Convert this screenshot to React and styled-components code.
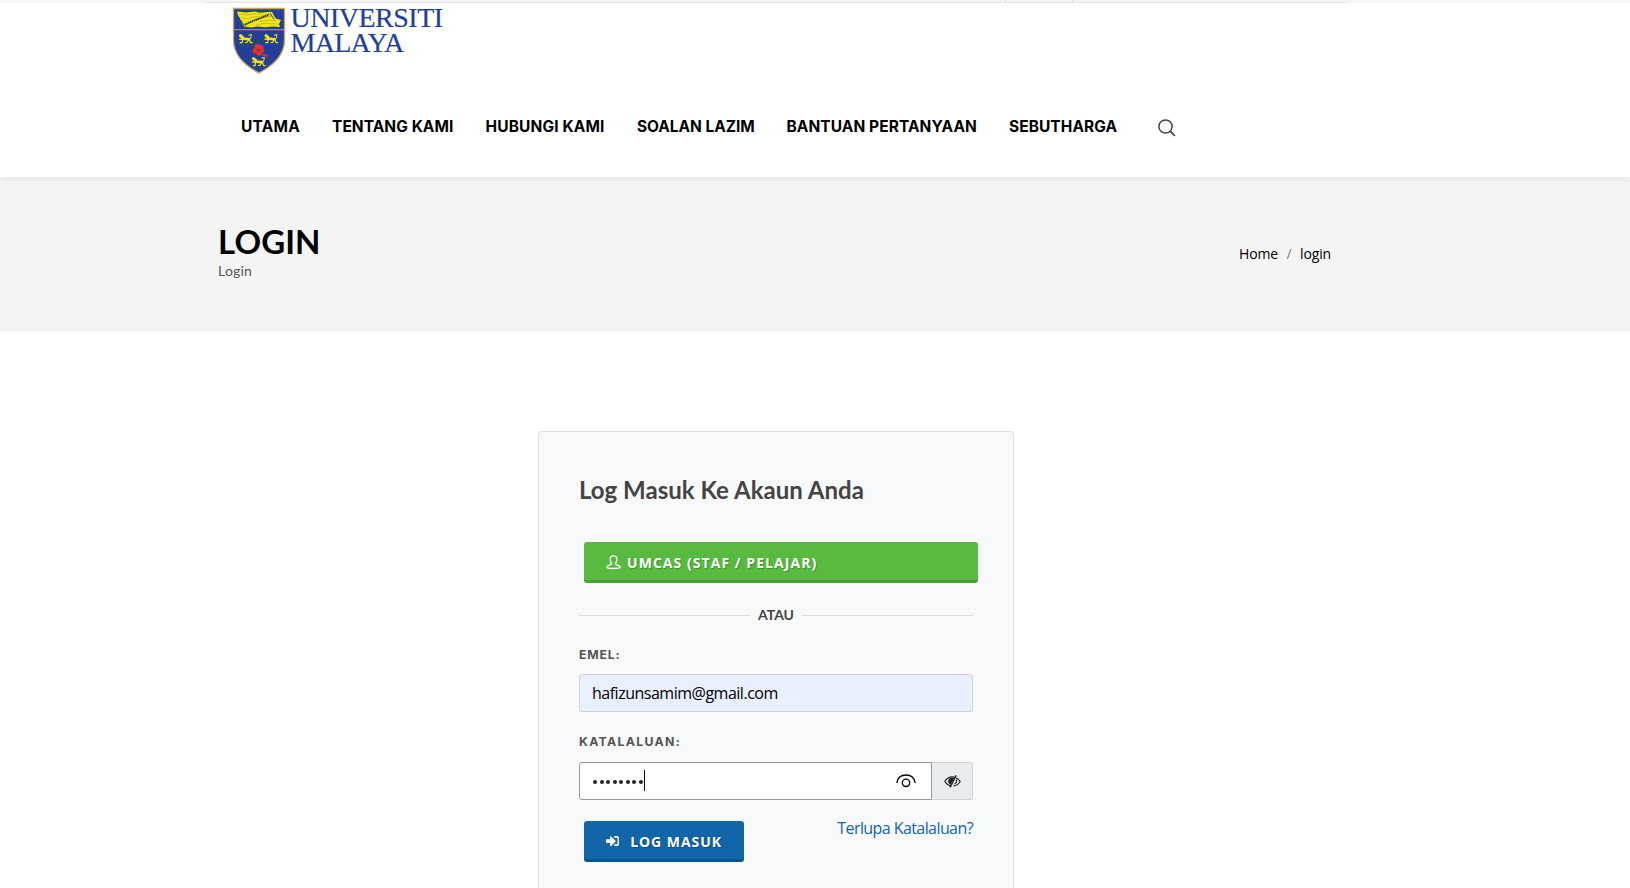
import React from "react";
import styled, { createGlobalStyle } from "styled-components";
import { FaSignInAlt } from "react-icons/fa";

const Global = createGlobalStyle`
  *, *::before, *::after { box-sizing: border-box; }
  body {
    margin: 0;
    height: 888px;
    overflow: hidden;
    background: #fff;
    color: #555;
    font-family: "Open Sans", "Noto Sans", sans-serif;
    font-size: 16px;
  }
  a { color: inherit; text-decoration: none; }
`;

const TopBar = styled.div`
  height: 3px;
  padding-left: 206px;
  background: #f5f5f5;
`;

const TopBarInner = styled.div`
  display: flex;
  width: 1140px;
  height: 3px;
  padding-left: 799px;
  border-bottom: 1px solid #e2e2e2;
`;

const TopBarCell = styled.div`
  width: ${(p) => p.$width}px;
  border-left: 1px solid #ddd;
`;

const Header = styled.header`
  position: relative;
  z-index: 1;
  height: 174px;
  padding: 4px 0 0 232px;
  background: #fff;
  box-shadow: 0 0 10px rgba(0, 0, 0, 0.1);
  clip-path: inset(0 0 -14px 0);
`;

const Logo = styled.a`
  display: flex;
  height: 82px;
  gap: 4.5px;
`;

const LogoText = styled.span`
  display: flex;
  flex-direction: column;
  margin-top: -2px;
  color: #213f99;
  font: 28px/25px "Liberation Serif", serif;
  -webkit-text-stroke: 0.2px #213f99;
  white-space: nowrap;
`;

const LogoLine = styled.span`
  letter-spacing: ${(p) => p.$spacing}px;
`;

const Nav = styled.nav`
  display: flex;
  align-items: center;
  height: 76px;
  padding-left: 9px;
`;

const NavLink = styled.a`
  flex: none;
  width: ${(p) => p.$width}px;
  color: #000;
  font: 700 15.5px/22px Inter, sans-serif;
  letter-spacing: ${(p) => p.$spacing}px;
  white-space: nowrap;
`;

const SearchButton = styled.a`
  display: flex;
  margin: 1px 0 0 0;
`;

const PageTitle = styled.section`
  display: flex;
  justify-content: space-between;
  height: 154px;
  padding: 44px 299px 0 218px;
  background: #f4f4f4;
  border-bottom: 1px solid #eaeaea;
  font-family: Lato, sans-serif;
`;

const TitleHeading = styled.h1`
  margin: 0;
  color: #000;
  font-size: 33px;
  font-weight: 700;
  line-height: 40px;
  letter-spacing: 0.1px;
`;

const TitleSub = styled.span`
  display: block;
  font-size: 14px;
  line-height: 20px;
  letter-spacing: 0.2px;
`;

const Breadcrumb = styled.nav`
  display: flex;
  gap: 8.5px;
  padding-top: 23px;
  color: #000;
  font: 14px/20px "Open Sans", sans-serif;
  letter-spacing: -0.15px;
`;

const Slash = styled.span`
  color: #6c757d;
`;

const Card = styled.main`
  width: 476px;
  height: 457px;
  margin: 100px 0 0 538px;
  padding: 39px 40px 0;
  border: 1px solid #dcdee0;
  border-bottom: 0;
  border-radius: 4px 4px 0 0;
  background: #f8f9fb;
`;

const CardTitle = styled.h3`
  margin: 0 0 51px;
  color: #444;
  font: 700 24px/37px Lato, sans-serif;
  height: 20px;
  white-space: nowrap;
  letter-spacing: ${(p) => p.$spacing}px;
`;

const Button = styled.a`
  display: flex;
  align-items: center;
  width: ${(p) => p.$width}px;
  height: 41px;
  margin-left: 5px;
  padding: 0 22px 1px;
  gap: ${(p) => p.$gap}px;
  border-radius: 3px;
  background: ${(p) => p.$color};
  box-shadow: inset 0 -3px 0 rgba(0, 0, 0, 0.15);
  color: #fff;
  font-size: 14px;
  font-weight: 700;
  letter-spacing: ${(p) => p.$spacing}px;
  text-shadow: 1px 1px 1px rgba(0, 0, 0, 0.25);
  white-space: nowrap;
`;

const Divider = styled.div`
  display: flex;
  align-items: center;
  gap: 8px;
  height: 20px;
  margin-top: 22px;
  color: #444;
  font: 700 14px/20px Lato, sans-serif;
  &::before, &::after {
    content: "";
    flex: 1;
    height: 1px;
    background: #dcdee0;
  }
`;

const Label = styled.label`
  display: block;
  height: 20px;
  margin-top: ${(p) => p.$top}px;
  color: #555;
  font: 700 12.3px/20px Inter, sans-serif;
  letter-spacing: ${(p) => p.$spacing}px;
`;

const Email = styled.input`
  display: block;
  width: 394px;
  height: 38px;
  margin-top: 9px;
  padding: 0 12px;
  border: 1px solid #cbd2da;
  border-radius: 3px;
  outline: 0;
  background: #e8f0fe;
  color: #000;
  font: 16px "Open Sans", sans-serif;
  letter-spacing: -0.49px;
`;

const PasswordGroup = styled.div`
  display: flex;
  width: 394px;
  height: 38px;
  margin-top: 10px;
`;

const PasswordField = styled.div`
  display: flex;
  align-items: center;
  width: 353px;
  padding: 0 15px 0 13px;
  border: 1px solid #999;
  border-radius: 3px 0 0 3px;
  background: #fff;
`;

const Dots = styled.span`
  display: flex;
  flex: 1;
  gap: 2.5px;
  align-items: center;
`;

const Dot = styled.i`
  width: 4px;
  height: 4px;
  margin-top: 1px;
  border-radius: 50%;
  background: #212529;
`;

const Caret = styled.i`
  width: 1px;
  height: 21px;
  margin-left: -1.2px;
  margin-top: -1px;
  background: #000;
`;

const Toggle = styled.button`
  display: flex;
  align-items: center;
  justify-content: center;
  width: 41px;
  padding: 0;
  border: 1px solid #ced4da;
  border-left: 0;
  border-radius: 0 3px 3px 0;
  background: #e9ecef;
`;

const Actions = styled.div`
  display: flex;
  justify-content: space-between;
  margin-top: 21px;
`;

const Forgot = styled.a`
  color: #1265a8;
  line-height: 22px;
  margin-top: -4px;
  letter-spacing: -0.58px;
  white-space: nowrap;
`;

const Lion = ({ x, y }) => (
  <g transform={`translate(${x} ${y})`} fill="none" stroke="#f5e616" strokeLinecap="round">
    <path d="M5 5.200l6.500.6" strokeWidth="2.600" />
    <path d="M3 2.300l1.800 1.500" strokeWidth="3" />
    <path d="M4.500 6L1.800 5.600M5 7l-.4 2.200H2.800M11 6.500L9.500 9H8M12 6.500l1.200 2.700h1.500" strokeWidth="1.200" />
    <path d="M12.500 5.200c2-.5.3-3 1.500-4M11.500 1.800l1.500-.6" strokeWidth="1" />
  </g>
);

const Crest = () => (
  <svg width="54" height="69" viewBox="0 0 54 68" preserveAspectRatio="none">
    <path d="M1.500 1.500h51v31c0 15-11 25-25.500 32.500C12.500 57.500 1.500 47.500 1.500 32.500z" fill="#233f97" stroke="#c9a45c" strokeWidth="1.300" />
    <path d="M1.500 22.500h51" stroke="#c9a45c" strokeWidth="1" />
    <path d="M5 4.500l9 .8 9-.8 5 1.200 12-1 2 4 2 3 5 1-2 4 1 3-7-.5-8 .8-8-.8-6 1-7-1-2-3-2-5-2-3z" fill="#f3e51b" />
    <path d="M7 7l8 1 9-1.500 8 1.500 7-1M9 10.500l6 1 8-2 8 .5 9-1M24 18l8-2 7 .5 8 .5M28 14.500l8-1.500 8 .5" fill="none" stroke="#b5a916" strokeWidth=".7" />
    <path d="M12.500 17.500l9-4 7-2.500 8.500-3.500" fill="none" stroke="#34351f" strokeWidth="2" strokeDasharray="1.500 .5" />
    <path d="M9 13l3 5.500M38 6l4 6" stroke="#233f97" strokeWidth=".9" />
    <Lion x={5.500} y={26} />
    <Lion x={31} y={26} />
    <Lion x={18.500} y={48.500} />
    <g fill="#e1322c">
      <circle cx="25.500" cy="39" r="2.800" />
      <circle cx="29" cy="40" r="2.600" />
      <circle cx="23.500" cy="43" r="2.800" />
      <circle cx="27" cy="45.500" r="2.600" />
      <circle cx="30" cy="43" r="2.200" />
      <path d="M30 46l5 .8 1.500 1.500-2 1-4-1.500z" />
    </g>
    <path d="M26 41l1.500 2m-3 1l2-1" stroke="#8d2036" strokeWidth=".8" />
  </svg>
);

const SearchIcon = () => (
  <svg width="18" height="18" viewBox="0 0 18 18" fill="none" stroke="#444" strokeWidth="1.500">
    <circle cx="7.500" cy="7.500" r="6.600" />
    <path d="M12.200 12.200l4.700 4.700" strokeWidth="1.700" />
  </svg>
);

const UserIcon = () => (
  <svg width="15" height="15" viewBox="0 0 15 15" fill="none" stroke="#fff" strokeWidth="1.300">
    <path d="M7.500.8C5.400.8 4.100 2.200 4.100 4.300c0 1.800.6 3.100 1.500 3.900.2.900-.2 1.200-1.300 1.600C2.300 10.500.8 11 .8 12.300c0 .4 2 1.200 6.700 1.200s6.700-.8 6.700-1.200c0-1.300-1.500-1.800-3.500-2.500-1.100-.4-1.500-.7-1.300-1.600.9-.8 1.500-2.100 1.500-3.900 0-2.100-1.300-3.500-3.400-3.500z" />
  </svg>
);

const RevealIcon = () => (
  <svg width="20" height="14" viewBox="0 0 20 14" fill="none" stroke="#000" strokeWidth="1.300">
    <path d="M.8 9C1.500 4 5 1 10 1s8.500 3 9.200 8" />
    <circle cx="10" cy="8.800" r="3.700" />
  </svg>
);

const EyeSlashIcon = () => (
  <svg width="17" height="13" viewBox="0 0 17 13" fill="none" stroke="#212529" strokeWidth="1.200">
    <path d="M7 11C4 10.500 2 8.500.8 6.500 2.500 3.500 5 1.900 8.500 1.900h1.300M12 2.700c1.800.8 3.200 2.100 4.200 3.800-1.500 2.600-3.700 4.100-6.700 4.500" />
    <path d="M8.500 2.500c-3 0-4.500 2-4.300 4 .1 1.500 1 2.700 2.300 3.300l4-7z" fill="#212529" stroke="none" />
    <path d="M12 .3L6 12.500" strokeWidth="1.500" />
    <path d="M12.300 4.500c.6 2-.1 3.700-2 4.500" />
  </svg>
);

const NAV = [
  ["UTAMA", 91, 0.2],
  ["TENTANG KAMI", 153.5, 0.05],
  ["HUBUNGI KAMI", 151.5, 0.12],
  ["SOALAN LAZIM", 149.5, -0.05],
  ["BANTUAN PERTANYAAN", 222.5, 0.06],
  ["SEBUTHARGA", 149, 0.05],
];

export default function App() {
  return (
    <>
      <Global />
      <TopBar>
        <TopBarInner>
          <TopBarCell $width={67} />
          <TopBarCell $width={1} />
        </TopBarInner>
      </TopBar>
      <Header>
        <Logo href="#">
          <Crest />
          <LogoText>
            <LogoLine $spacing={-0.5}>UNIVERSITI</LogoLine>
            <LogoLine $spacing={-0.7}>MALAYA</LogoLine>
          </LogoText>
        </Logo>
        <Nav>
          {NAV.map(([text, width, spacing]) => (
            <NavLink key={text} href="#" $width={width} $spacing={spacing}>{text}</NavLink>
          ))}
          <SearchButton href="#"><SearchIcon /></SearchButton>
        </Nav>
      </Header>
      <PageTitle>
        <div>
          <TitleHeading>LOGIN</TitleHeading>
          <TitleSub>Login</TitleSub>
        </div>
        <Breadcrumb>
          <a href="#">Home</a>
          <Slash>/</Slash>
          <a href="#">login</a>
        </Breadcrumb>
      </PageTitle>
      <Card>
        <CardTitle $spacing={0.02}>Log Masuk Ke Akaun Anda</CardTitle>
        <Button href="#" $width={394} $gap={6} $color="#59ba41" $spacing={1.05}>
          <UserIcon />
          UMCAS (STAF / PELAJAR)
        </Button>
        <Divider>ATAU</Divider>
        <Label $top={20} $spacing={0.8}>EMEL:</Label>
        <Email defaultValue="hafizunsamim@gmail.com" spellCheck={false} />
        <Label $top={20} $spacing={1.3}>KATALALUAN:</Label>
        <PasswordGroup>
          <PasswordField>
            <Dots>
              {Array.from({ length: 8 }, (_, i) => <Dot key={i} />)}
              <Caret />
            </Dots>
            <RevealIcon />
          </PasswordField>
          <Toggle><EyeSlashIcon /></Toggle>
        </PasswordGroup>
        <Actions>
          <Button href="#" $width={160} $gap={11} $color="#1265a8" $spacing={0.95}>
            <FaSignInAlt size={16} />
            LOG MASUK
          </Button>
          <Forgot href="#">Terlupa Katalaluan?</Forgot>
        </Actions>
      </Card>
    </>
  );
}
